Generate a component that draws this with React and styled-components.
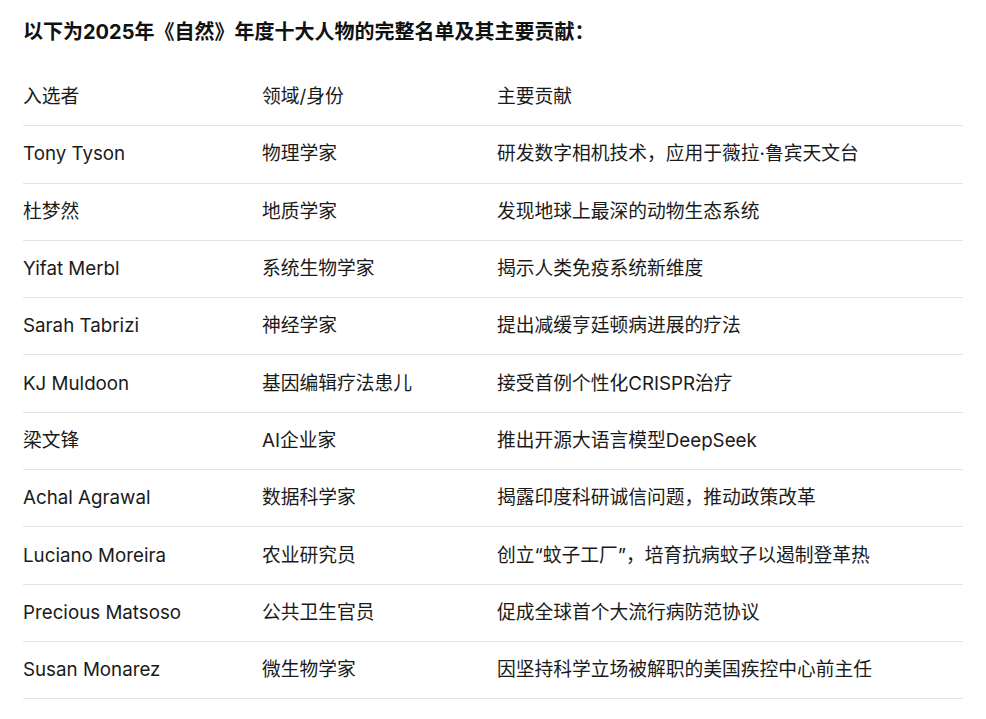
import styled, { createGlobalStyle } from 'styled-components';

const GlobalStyle = createGlobalStyle`
    body {
        margin: 0;
        background: #fff;
        font-family: "Inter", "Noto Sans CJK SC", sans-serif;
        color: #1a1a1a;
    }
`;

const rows = [
    ['Tony Tyson', '物理学家', '研发数字相机技术，应用于薇拉·鲁宾天文台'],
    ['杜梦然', '地质学家', '发现地球上最深的动物生态系统'],
    ['Yifat Merbl', '系统生物学家', '揭示人类免疫系统新维度'],
    ['Sarah Tabrizi', '神经学家', '提出减缓亨廷顿病进展的疗法'],
    ['KJ Muldoon', '基因编辑疗法患儿', '接受首例个性化CRISPR治疗'],
    ['梁文锋', 'AI企业家', '推出开源大语言模型DeepSeek'],
    ['Achal Agrawal', '数据科学家', '揭露印度科研诚信问题，推动政策改革'],
    ['Luciano Moreira', '农业研究员', '创立“蚊子工厂”，培育抗病蚊子以遏制登革热'],
    ['Precious Matsoso', '公共卫生官员', '促成全球首个大流行病防范协议'],
    ['Susan Monarez', '微生物学家', '因坚持科学立场被解职的美国疾控中心前主任'],
];

const App = () => {
    return (
        <>
            <GlobalStyle />
            <Page>
                <Heading>以下为2025年《自然》年度十大人物的完整名单及其主要贡献：</Heading>
                <Table>
                    <Row>
                        <Cell>入选者</Cell>
                        <Cell>领域/身份</Cell>
                        <Cell>主要贡献</Cell>
                    </Row>
                    {rows.map((r, idx) => (
                        <Row key={idx}>
                            <Cell>{r[0]}</Cell>
                            <Cell>{r[1]}</Cell>
                            <Cell>{r[2]}</Cell>
                        </Row>
                    ))}
                </Table>
            </Page>
        </>
    );
};

const Page = styled.div`
    padding: 17px 24px 0 23px;
    width: 940px;
`;

const Heading = styled.h2`
    margin: 0;
    font-size: 20px;
    line-height: 30px;
    font-weight: 700;
    color: #111;
`;

const Table = styled.div`
    display: flex;
    flex-flow: column;
    margin-top: 22px;
`;

const Row = styled.div`
    display: grid;
    grid-template-columns: 239px 235px 1fr;
    align-items: center;
    height: 57.3px;
    box-sizing: border-box;
    border-bottom: 1px solid #e3e3e3;
`;

const Cell = styled.div`
    font-size: 18.75px;
    line-height: 26px;
    white-space: nowrap;
`;

export default App;
